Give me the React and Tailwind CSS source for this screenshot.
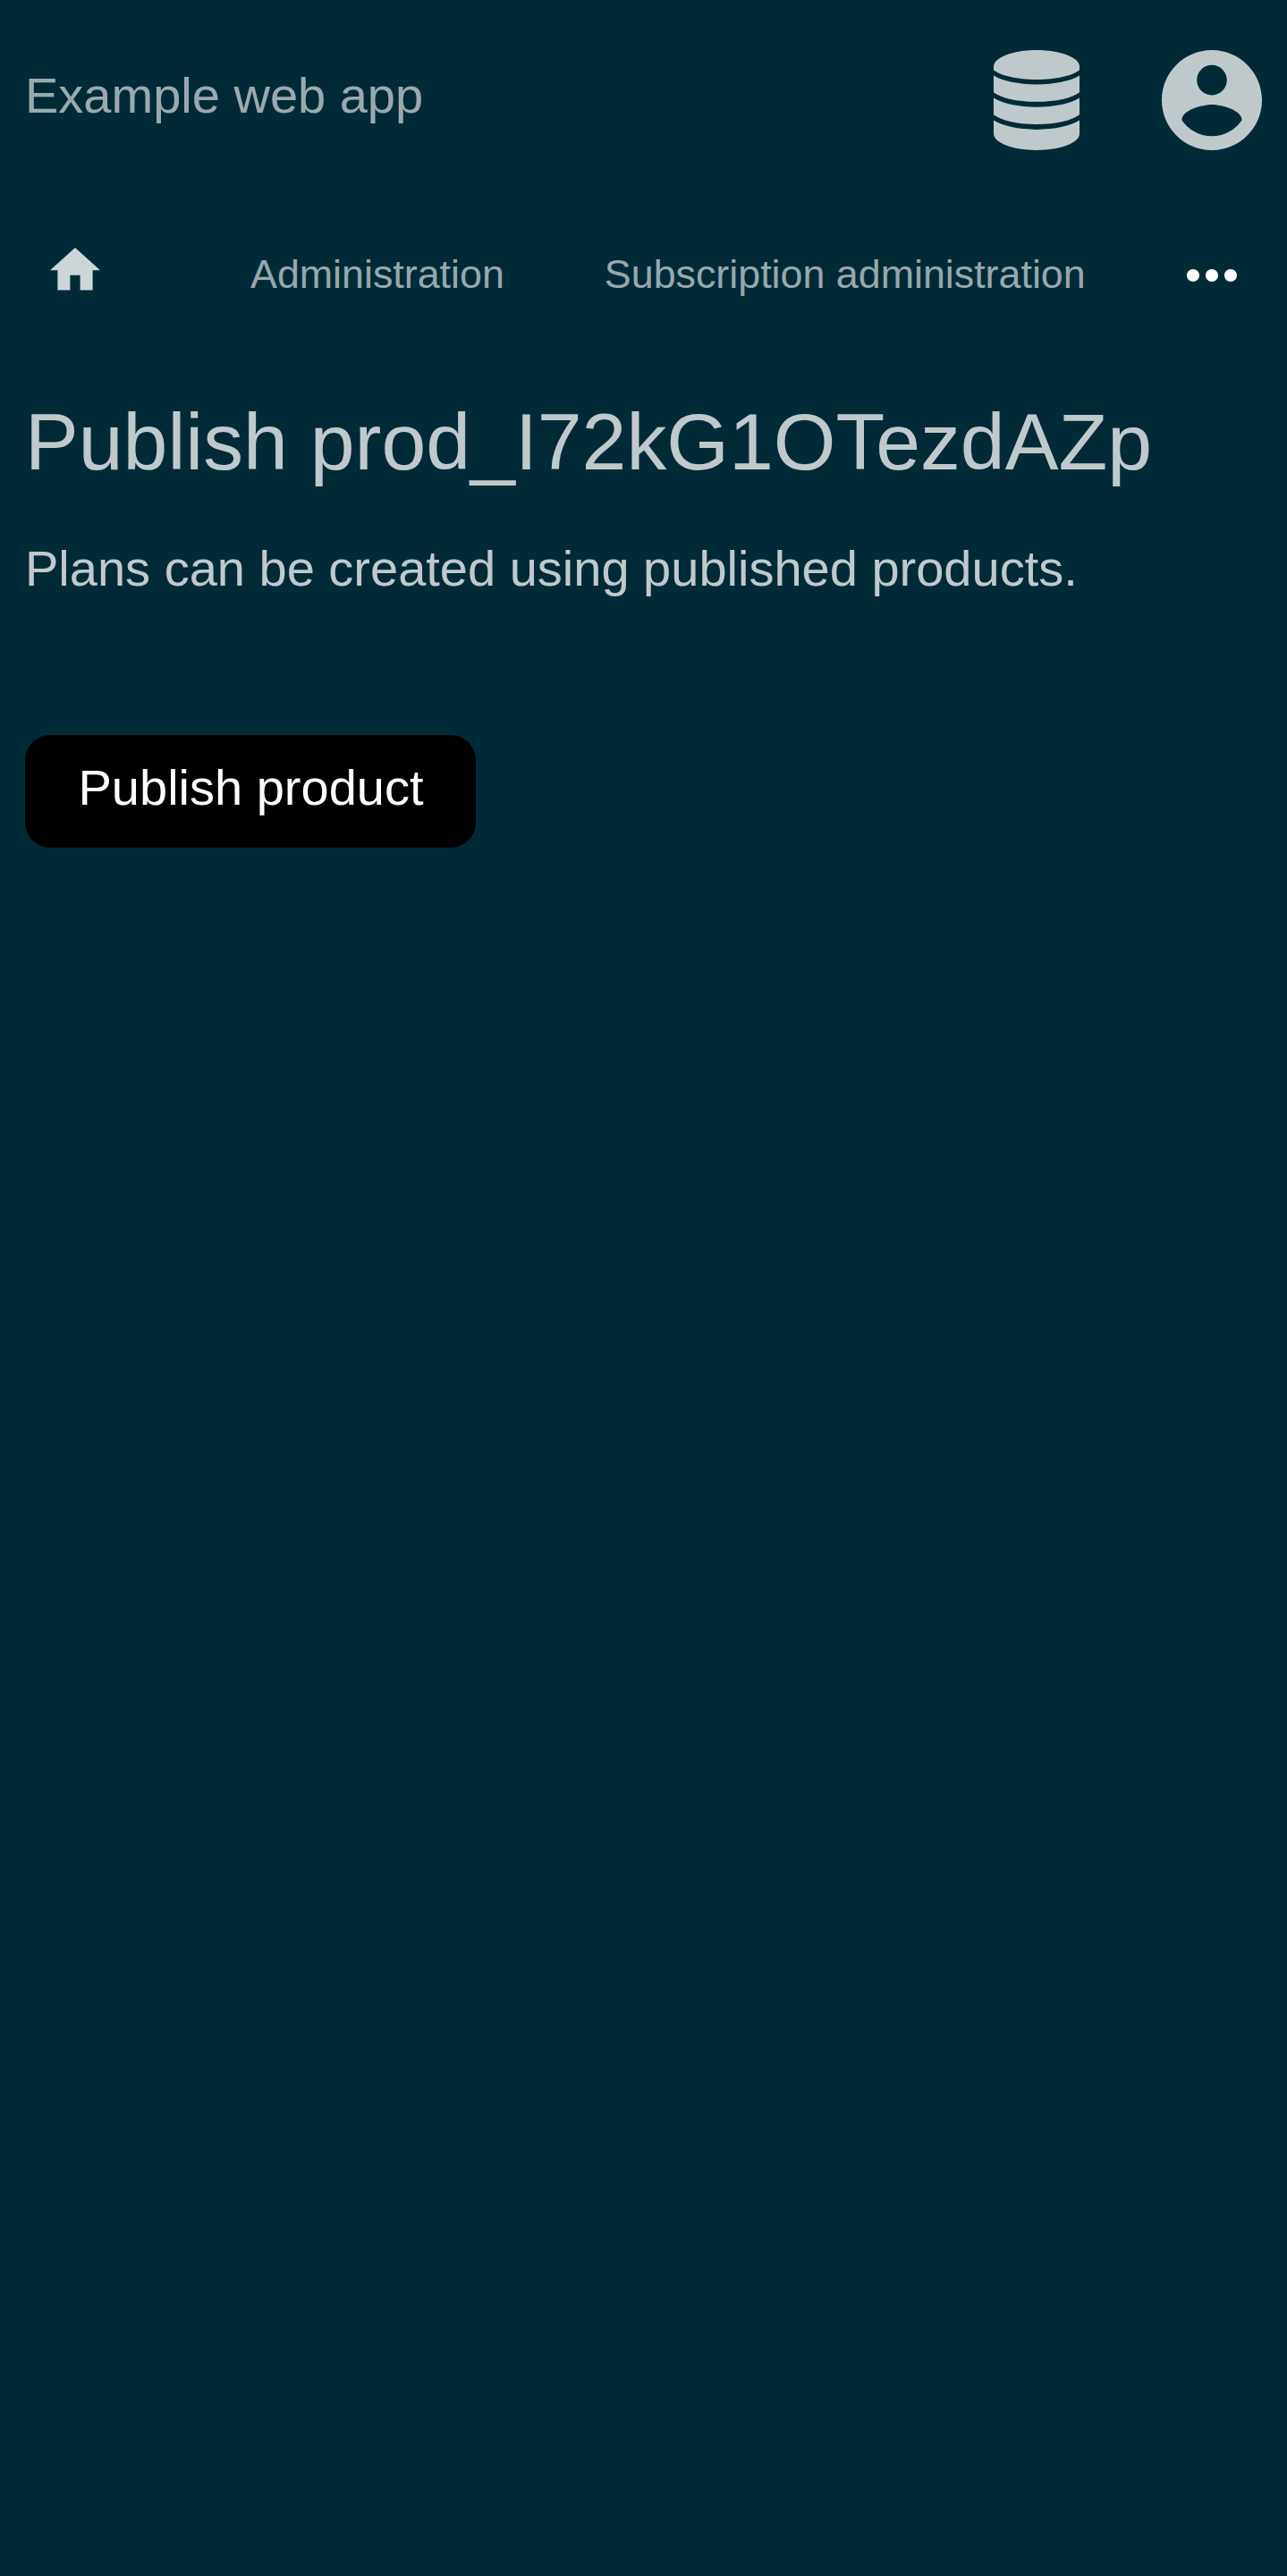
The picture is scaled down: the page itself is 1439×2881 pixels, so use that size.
function DatabaseIcon() {
  return (
    <svg viewBox="0 0 96 112" className="h-28 w-24" fill="currentColor">
      <path d="M48 0C21.5 0 0 8.3 0 18.5v3.7C8 28.7 27 33 48 33s40-4.3 48-10.8v-3.7C96 8.3 74.5 0 48 0z" />
      <path d="M0 28.6C10 34.9 28 38.4 48 38.4s38-3.5 48-9.8v18.6C88 53.6 70 57.8 48 57.8S8 53.6 0 47.2z" />
      <path d="M0 53.6C10 59.9 28 63.7 48 63.7s38-3.8 48-10.1v18.6C88 78.6 70 82.9 48 82.9S8 78.6 0 72.2z" />
      <path d="M0 78.6C10 84.9 28 88.9 48 88.9s38-4 48-10.3v15C96 103.8 74.5 112 48 112S0 103.8 0 93.6z" />
    </svg>
  );
}

function AccountIcon() {
  return (
    <svg viewBox="2 2 20 20" className="size-28" fill="currentColor">
      <path d="M12 2C6.48 2 2 6.48 2 12s4.48 10 10 10 10-4.48 10-10S17.52 2 12 2zm0 3c1.66 0 3 1.34 3 3s-1.34 3-3 3-3-1.34-3-3 1.34-3 3-3zm0 14.2c-2.5 0-4.71-1.28-6-3.22.03-1.99 4-3.08 6-3.08 1.99 0 5.97 1.09 6 3.08-1.29 1.94-3.5 3.22-6 3.22z" />
    </svg>
  );
}

function HomeIcon() {
  return (
    <svg viewBox="2 3 20 17" className="h-[47.6px] w-14" fill="currentColor">
      <path d="M10 20v-6h4v6h5v-8h3L12 3 2 12h3v8z" />
    </svg>
  );
}

function MoreIcon() {
  return (
    <svg viewBox="4 10 16 4" className="h-3.5 w-14" fill="currentColor">
      <path d="M6 10c-1.1 0-2 .9-2 2s.9 2 2 2 2-.9 2-2-.9-2-2-2zm12 0c-1.1 0-2 .9-2 2s.9 2 2 2 2-.9 2-2-.9-2-2-2zm-6 0c-1.1 0-2 .9-2 2s.9 2 2 2 2-.9 2-2-.9-2-2-2z" />
    </svg>
  );
}

export default function App() {
  return (
    <div className="min-h-[2881px] bg-[#002b36] font-['Liberation_Sans',Arial,sans-serif] text-white/75">
      <header className="flex h-56 w-[1438.5px] items-start justify-between px-7 pt-14">
        <a className="mt-[19px] text-[56px] leading-[63px] text-white/60">Example web app</a>
        <div className="flex gap-[92px]">
          <DatabaseIcon />
          <AccountIcon />
        </div>
      </header>
      <nav className="flex h-[168px] w-[1438.5px] items-start px-14 text-[44.8px] leading-[50px] text-white/60">
        <a className="mt-[53px] mr-[168px] text-white/80">
          <HomeIcon />
        </a>
        <a className="mt-[57px] mr-28 whitespace-nowrap">Administration</a>
        <a className="mt-[57px] whitespace-nowrap">Subscription administration</a>
        <button className="mt-[77px] ml-auto text-white">
          <MoreIcon />
        </button>
      </nav>
      <main className="px-7 pt-[52px]">
        <h1 className="text-[89.6px] leading-[100px]">Publish prod_I72kG1OTezdAZp</h1>
        <p className="mt-[60px] text-[56px] leading-[63px]">Plans can be created using published products.</p>
        <button className="mt-[155px] flex h-[126px] w-[504px] items-start rounded-[28px] bg-black pt-[27px] pl-[59.5px] text-[56px] leading-[63px] whitespace-nowrap text-white">
          Publish product
        </button>
      </main>
    </div>
  );
}
